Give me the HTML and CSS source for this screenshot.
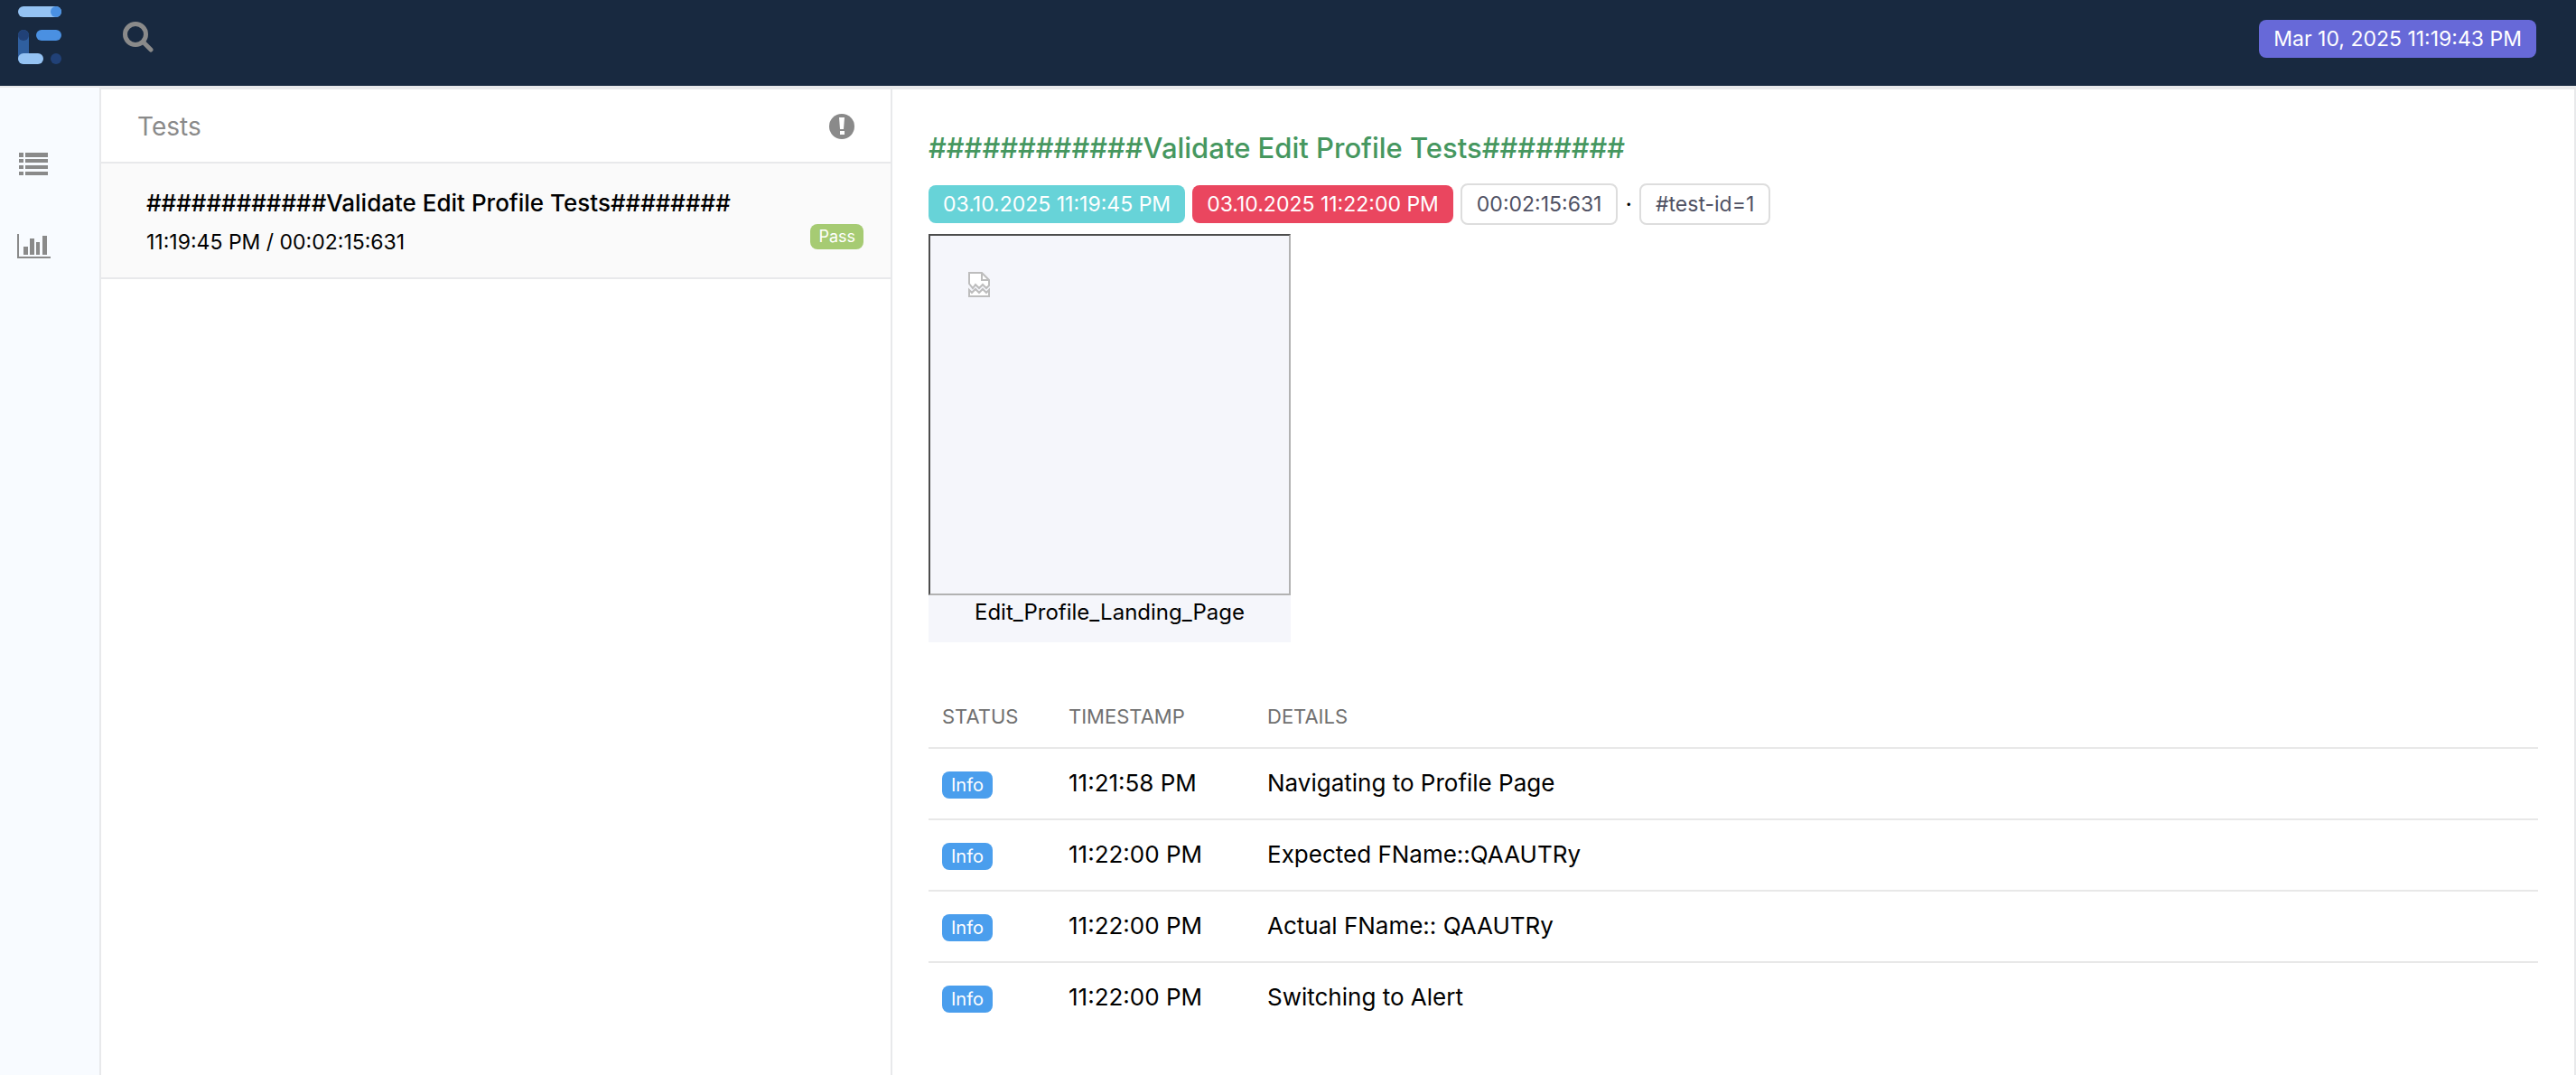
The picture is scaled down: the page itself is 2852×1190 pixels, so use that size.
FILE: index.html
```html
<!DOCTYPE html>
<html lang="en">
<head>
<meta charset="utf-8">
<title>Test Report</title>
<link rel="stylesheet" href="styles.css">
</head>
<body>
<header class="topbar">
  <a class="logo" href="#" aria-label="Home">
    <svg width="50" height="66" viewBox="0 0 50 66">
      <rect x="0" y="0" width="48" height="12" rx="6" fill="#95c3f3"/>
      <circle cx="42" cy="6" r="6" fill="#4a90e2"/>
      <rect x="20" y="26" width="28" height="12" rx="6" fill="#4a90e2"/>
      <rect x="0" y="26" width="12" height="38" rx="6" fill="#2f5f9f"/>
      <circle cx="6" cy="32" r="6" fill="#214177"/>
      <rect x="0" y="52" width="28" height="12" rx="6" fill="#95c3f3"/>
      <circle cx="42" cy="58" r="6" fill="#214177"/>
    </svg>
  </a>
  <button class="icon-button search" type="button" aria-label="Search">
    <svg width="34" height="34" viewBox="0 0 34 34" fill="none" stroke="#8a8a8a">
      <circle cx="14" cy="14" r="11.5" stroke-width="5"/>
      <path d="M23 23l8 8" stroke-width="5" stroke-linecap="round"/>
    </svg>
  </button>
  <span class="badge run-date">Mar 10, 2025 11:19:43 PM</span>
</header>
<div class="shell">
  <nav class="sidenav">
    <a href="#" aria-label="Tests">
      <svg width="36" height="26" viewBox="0 0 36 26" fill="#8a8a8a">
        <path d="M2 0h5v5H2zM9 0h25v5H9zM2 7h5v4H2zM9 7h25v4H9zM2 14h5v4H2zM9 14h25v4H9zM2 21h5v4H2zM9 21h25v4H9z"/>
      </svg>
    </a>
    <a href="#" aria-label="Dashboard">
      <svg width="37" height="28" viewBox="0 0 37 28" fill="#8a8a8a">
        <path d="M0 0h2v25h35v2H0zM7 14h5v9H7zM14 5h5v18h-5zM21 9h4v14h-4zM28 2h5v21h-5z"/>
      </svg>
    </a>
  </nav>
  <section class="test-list">
    <div class="list-head">
      <span>Tests</span>
      <button class="icon-button" type="button" aria-label="Filter by status">
        <svg width="28" height="28" viewBox="0 0 28 28">
          <circle cx="14" cy="14" r="14" fill="#8a8a8a"/>
          <path d="M11 4h6l-1 13h-4zM12 19h5v4h-5z" fill="#fff"/>
        </svg>
      </button>
    </div>
    <div class="test-item">
      <p class="test-name">############Validate Edit Profile Tests########</p>
      <p class="test-meta"><span>11:19:45 PM / 00:02:15:631</span><span class="tag pass">Pass</span></p>
    </div>
  </section>
  <main class="detail">
    <h1 class="detail-title">############Validate Edit Profile Tests########</h1>
    <div class="badges">
      <span class="badge start">03.10.2025 11:19:45 PM</span>
      <span class="badge end">03.10.2025 11:22:00 PM</span>
      <span class="badge outline">00:02:15:631</span>
      <span class="dot">·</span>
      <span class="badge outline">#test-id=1</span>
    </div>
    <figure class="shot">
      <div class="frame">
        <svg width="28" height="30" viewBox="0 0 28 30" fill="#fff" stroke="#bdbdbd" stroke-width="2">
          <path d="M3 13V1h14l8 8v6l-3 3-4-4-4 4-4-4-3 4z"/>
          <path d="M17 1v8h8" fill="none"/>
          <path d="M3 20v7h22v-7l-3 3-4-4-4 4-4-4-4 4z"/>
        </svg>
      </div>
      <figcaption>Edit_Profile_Landing_Page</figcaption>
    </figure>
    <table class="log">
      <thead><tr><th class="c-status">STATUS</th><th class="c-time">TIMESTAMP</th><th>DETAILS</th></tr></thead>
      <tbody>
        <tr><td><span class="tag info">Info</span></td><td>11:21:58 PM</td><td>Navigating to Profile Page</td></tr>
        <tr><td><span class="tag info">Info</span></td><td>11:22:00 PM</td><td>Expected FName::QAAUTRy</td></tr>
        <tr><td><span class="tag info">Info</span></td><td>11:22:00 PM</td><td>Actual FName:: QAAUTRy</td></tr>
        <tr><td><span class="tag info">Info</span></td><td>11:22:00 PM</td><td>Switching to Alert</td></tr>
      </tbody>
    </table>
  </main>
</div>
</body>
</html>
```
FILE: styles.css
```css
* { box-sizing: border-box; }
body {
  margin: 0;
  min-height: 100vh;
  display: flex;
  flex-direction: column;
  background: #fff;
  color: #000;
  font: 26px/40px Inter, "Liberation Sans", sans-serif;
}
p, h1, figure { margin: 0; }
.topbar {
  height: 97px;
  display: flex;
  align-items: flex-start;
  background: #182940;
  border-bottom: 2px solid #e8e9eb;
  padding-right: 44px;
}
.logo { display: block; margin: 7px 0 0 20px; height: 66px; }
.icon-button { border: 0; padding: 0; background: none; display: flex; cursor: pointer; }
.search { margin: 24px 0 0 66px; }
.badge {
  display: inline-block;
  padding: 0 16px;
  border-radius: 8px;
  font-size: 23px;
  line-height: 42px;
  color: #fff;
}
.run-date { margin: 22px 0 0 auto; background: #6769d8; }
.shell { flex: 1; display: flex; }
.sidenav {
  width: 112px;
  flex: none;
  display: flex;
  flex-direction: column;
  gap: 64px;
  padding: 72px 0 0 19px;
  background: #f8fbff;
  border-right: 2px solid #e8e9eb;
}
.sidenav a { display: flex; }
.test-list { width: 876px; flex: none; border-top: 2px solid #e8e9eb; border-right: 2px solid #e8e9eb; }
.list-head {
  display: flex;
  align-items: center;
  justify-content: space-between;
  padding: 21px 40px 19px;
  border-bottom: 2px solid #e8e9eb;
  color: #8a8a8a;
  font-size: 28px;
}
.test-item { padding: 24px 30px 16px 50px; background: #fafafa; border-bottom: 2px solid #e8e9eb; }
.test-name { font-weight: 500; }
.test-meta { display: flex; align-items: center; justify-content: space-between; font-size: 23px; line-height: 46px; }
.tag {
  display: inline-block;
  height: 28px;
  padding: 0 9px;
  border-radius: 8px;
  font-size: 18px;
  line-height: 28px;
  color: #fff;
}
.pass { background: #a6cb73; margin-bottom: 12px; }
.info { background: #4a9eed; padding: 0 10px; font-size: 20px; height: 30px; line-height: 30px; vertical-align: middle; }
.detail {
  flex: 1;
  border-top: 2px solid #e8e9eb;
  border-right: 2px solid #e8e9eb;
  padding: 45px 40px 20px;
}
.detail-title { font-size: 31px; line-height: 40px; font-weight: 500; color: #46975f; }
.badges { display: flex; align-items: center; gap: 8px; margin-top: 19px; }
.start { background: #67d3d8; }
.end { background: #ea465f; }
.outline { border: 2px solid #ddd; color: #4f5163; }
.shot { width: 401px; margin-top: 10px; background: #f5f6fb; }
.frame { height: 400px; padding: 40px; border: 2px solid; border-color: #4d4d4d #b2b2b2 #b2b2b2 #4d4d4d; }
figcaption { padding-bottom: 14px; font-size: 24px; line-height: 38px; text-align: center; }
.log { width: 100%; margin-top: 48px; border-collapse: collapse; table-layout: fixed; }
.log th, .log td { padding: 18px 15px 19px; text-align: left; border-bottom: 2px solid #e8e8e8; }
.log th { padding: 14px 15px; color: #707070; font-size: 22px; font-weight: 400; }
.log tr:last-child td { border-bottom: 0; }
.log .c-status { width: 140px; }
.log .c-time { width: 220px; }
```
